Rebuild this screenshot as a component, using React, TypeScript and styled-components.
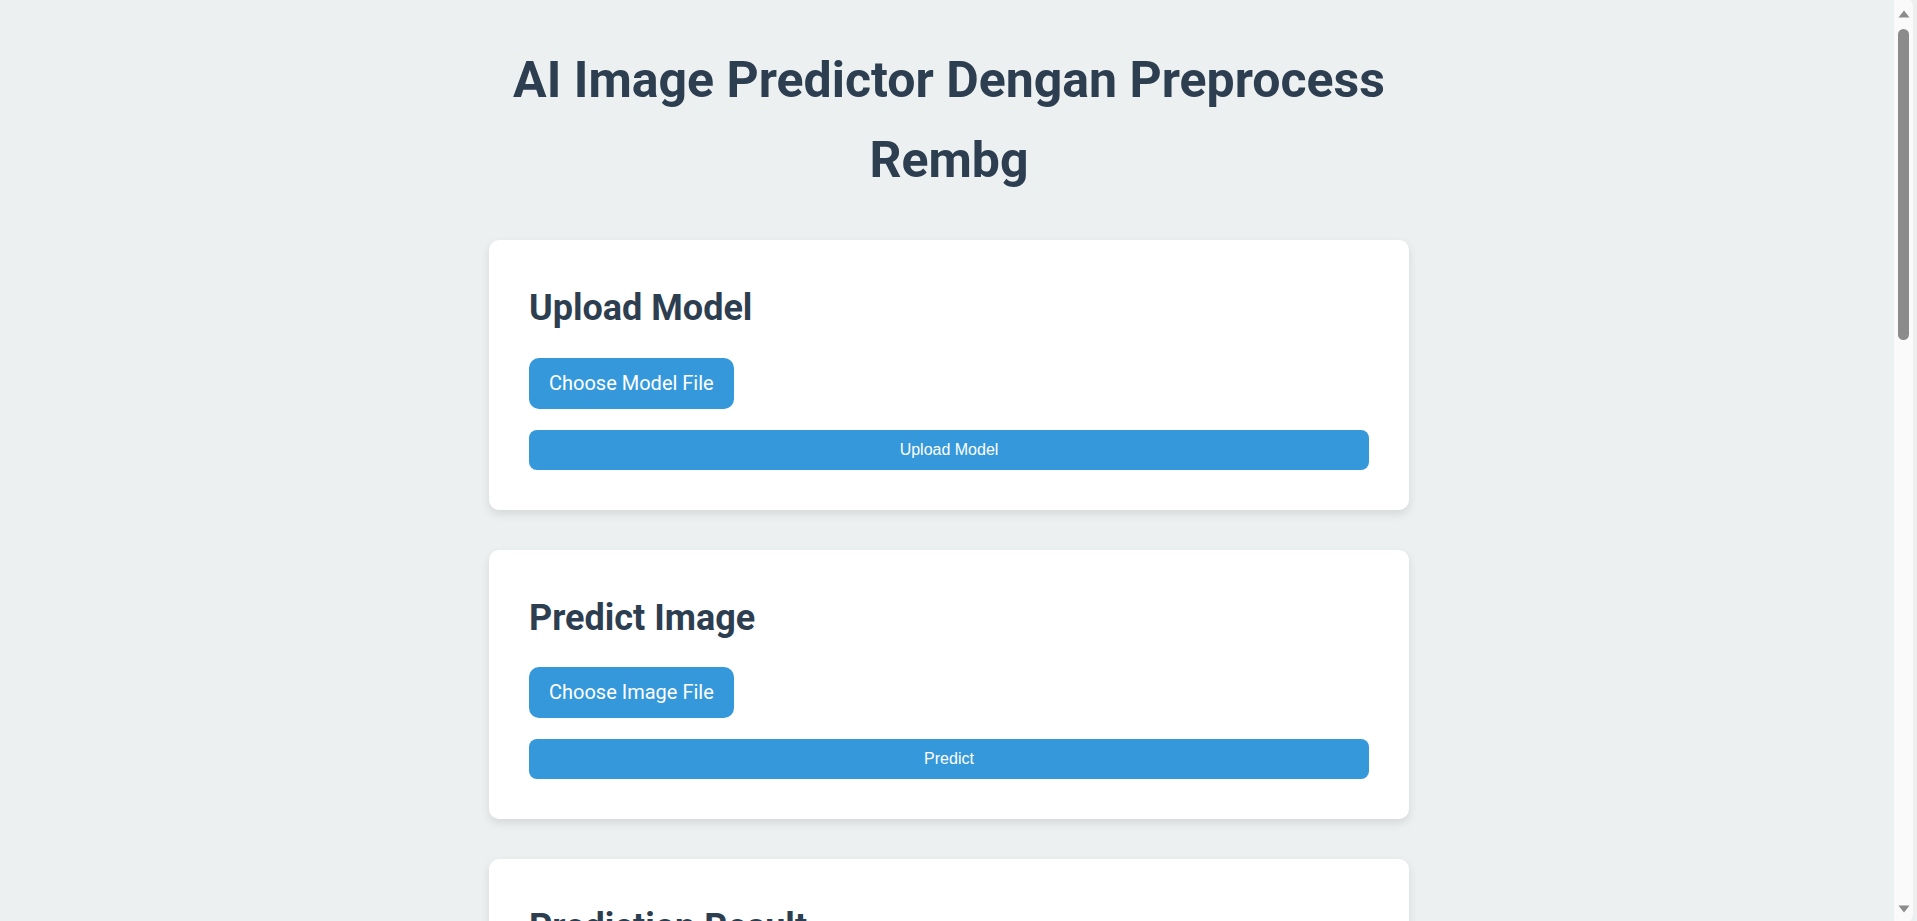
import styled, { createGlobalStyle } from "styled-components";

const GlobalStyle = createGlobalStyle`
  html, body {
    margin: 0;
    padding: 0;
  }

  body {
    background-color: #ecf0f1;
    color: #2c3e50;
    font-family: Roboto, "Liberation Sans", Arial, sans-serif;
    font-size: 20px;
    line-height: 1.6;
  }
`;

const Page = styled.div`
  padding: 40px 39px 40px 20px;
`;

const Container = styled.main`
  max-width: 920px;
  margin: 0 auto;
`;

const Title = styled.h1`
  margin: 0 0 40px;
  font-size: 50px;
  font-weight: 700;
  line-height: 80px;
  text-align: center;
`;

const Card = styled.section`
  background-color: #ffffff;
  border-radius: 10px;
  box-shadow: 0 4px 10px rgba(0, 0, 0, 0.1);
  padding: 40px;
  margin-bottom: 40px;
  display: flex;
  flex-direction: column;
  align-items: flex-start;
`;

const CardTitle = styled.h2`
  margin: 0 0 20px;
  font-size: 36px;
  font-weight: 700;
  line-height: 1.6;
`;

const FileLabel = styled.label`
  display: inline-block;
  background-color: #3498db;
  color: #ffffff;
  font-size: 20px;
  line-height: 31px;
  padding: 10px 20px;
  border-radius: 10px;
  cursor: pointer;
`;

const HiddenInput = styled.input`
  display: none;
`;

const ActionButton = styled.button`
  width: 100%;
  margin-top: 21px;
  padding: 12px 20px;
  border: none;
  border-radius: 8px;
  background-color: #3498db;
  color: #ffffff;
  font-family: "Liberation Sans", Arial, sans-serif;
  font-size: 16px;
  line-height: 16px;
  cursor: pointer;
`;

const ResultText = styled.p`
  margin: 0 0 20px;
  font-size: 20px;
`;

const PreviewGrid = styled.div`
  width: 100%;
  display: grid;
  gap: 20px;
`;

const PreviewBox = styled.div`
  height: 640px;
  border: 2px dashed #d0d7dc;
  border-radius: 10px;
  display: flex;
  align-items: center;
  justify-content: center;
  color: #95a5a6;
  font-size: 18px;
`;

/* window scrollbar, drawn over the page edge */
const ScrollTrack = styled.div`
  position: fixed;
  top: 0;
  right: 0;
  bottom: 0;
  width: 19px;
  background-color: #fafafa;
  border-right: 4px solid #eeeeee;
  border-top-right-radius: 8px;
  border-bottom-right-radius: 8px;
  display: flex;
  flex-direction: column;
  align-items: center;
  padding: 10px 0 8px;
  box-sizing: border-box;
  width: 23px;
  pointer-events: none;
`;

const ScrollArrow = styled.svg`
  flex: none;
  display: block;
`;

const ScrollThumb = styled.div`
  flex: none;
  width: 11px;
  height: 311px;
  margin-top: 11px;
  border-radius: 6px;
  background-color: #8b8b8b;
`;

const ScrollSpacer = styled.div`
  flex: 1;
`;

export default function App() {
  return (
    <>
      <GlobalStyle />
      <Page>
        <Container>
          <Title>AI Image Predictor Dengan Preprocess Rembg</Title>

          <Card>
            <CardTitle>Upload Model</CardTitle>
            <FileLabel>
              Choose Model File
              <HiddenInput type="file" />
            </FileLabel>
            <ActionButton>Upload Model</ActionButton>
          </Card>

          <Card>
            <CardTitle>Predict Image</CardTitle>
            <FileLabel>
              Choose Image File
              <HiddenInput type="file" accept="image/*" />
            </FileLabel>
            <ActionButton>Predict</ActionButton>
          </Card>

          <Card>
            <CardTitle>Prediction Result</CardTitle>
            <ResultText>Belum ada prediksi.</ResultText>
            <PreviewGrid>
              <PreviewBox>Original Image</PreviewBox>
              <PreviewBox>Rembg Result</PreviewBox>
            </PreviewGrid>
          </Card>
        </Container>
      </Page>

      <ScrollTrack>
        <ScrollArrow width="12" height="8" viewBox="0 0 12 8">
          <path d="M6 0.5 L11.5 7.5 L0.5 7.5 Z" fill="#8b8b8b" />
        </ScrollArrow>
        <ScrollThumb />
        <ScrollSpacer />
        <ScrollArrow width="12" height="8" viewBox="0 0 12 8">
          <path d="M0.5 0.5 L11.5 0.5 L6 7.5 Z" fill="#8b8b8b" />
        </ScrollArrow>
      </ScrollTrack>
    </>
  );
}
